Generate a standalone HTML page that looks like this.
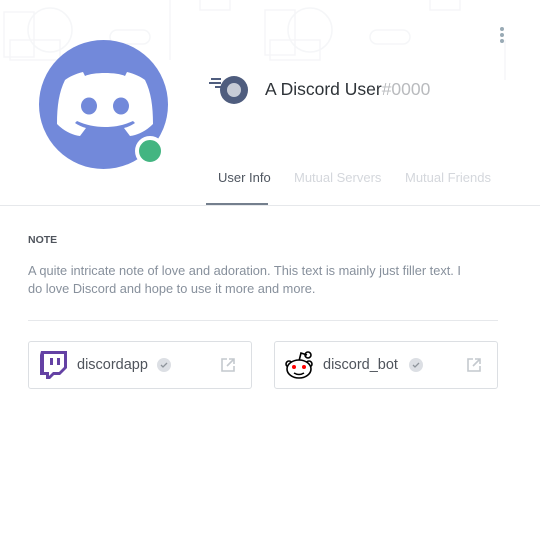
<!DOCTYPE html>
<html><head><style>
body{margin:0;width:540px;height:546px;background:#fff;font-family:"Liberation Sans",sans-serif;position:relative;overflow:hidden}
.hdr{position:absolute;left:0;top:0;width:540px;height:205px;background:#fff;border-bottom:1px solid #e6e8eb}
.t{position:absolute;white-space:nowrap}
.card{position:absolute;top:341px;width:222px;height:46px;border:1px solid #dcdfe3;border-radius:3px}
</style></head><body>
<div class="hdr">
<svg width="540" height="205" style="position:absolute;left:0;top:0" fill="none" stroke="#f5f6f8" stroke-width="1.5">
<rect x="4" y="12" width="30" height="45"/><circle cx="50" cy="30" r="22"/><rect x="10" y="40" width="50" height="20"/>
<rect x="265" y="10" width="30" height="45"/><circle cx="310" cy="30" r="22"/><rect x="270" y="40" width="50" height="20"/>
<path d="M170 0v60M200 0v10h30V0M430 0v10h30V0M505 40v40"/>
<rect x="110" y="30" width="40" height="14" rx="7"/><rect x="370" y="30" width="40" height="14" rx="7"/>
</svg>
<div style="position:absolute;left:39px;top:40px;width:129px;height:129px;border-radius:50%;background:#7289da"></div>
<svg style="position:absolute;left:55px;top:68px" width="100" height="75" viewBox="0 0 100 75">
<path fill="#fff" d="M28 4C20 6 14 9 10 12 4 24 2 38 2 56 9 63 17 67 25 68l6-8c-4-1-8-3-11-5l2-2c17 8 39 8 56 0l2 2c-3 2-7 4-11 5l6 8c8-1 16-5 23-12 0-18-2-32-8-44-4-3-10-6-18-8l-2 4C62 4 38 4 30 8z"/>
<ellipse cx="34" cy="38" rx="8" ry="8.5" fill="#7289da"/><ellipse cx="66" cy="38" rx="8" ry="8.5" fill="#7289da"/>
</svg>
<div style="position:absolute;left:135px;top:136px;width:22px;height:22px;border-radius:50%;background:#43b581;border:4px solid #fff"></div>
<svg style="position:absolute;left:207px;top:74px" width="42" height="32" viewBox="0 0 42 32">
<circle cx="27" cy="16" r="14" fill="#4f5d7e"/><circle cx="27" cy="16" r="7" fill="#c7ccd6"/>
<path d="M4 5h10M2 9h12M8 13h6" stroke="#4f5d7e" stroke-width="2"/>
</svg>
<div class="t" style="left:265px;top:79px;font-size:17.5px;color:#2e3338">A Discord User<span style="color:#b9bbbe">#0000</span></div>
<div style="position:absolute;left:500px;top:27px">
<div style="width:4px;height:4px;border-radius:50%;background:#99aab5;margin-bottom:2px"></div>
<div style="width:4px;height:4px;border-radius:50%;background:#99aab5;margin-bottom:2px"></div>
<div style="width:4px;height:4px;border-radius:50%;background:#99aab5"></div></div>
<div class="t" style="left:218px;top:170px;font-size:13px;color:#4f5660">User Info</div>
<div class="t" style="left:294px;top:170px;font-size:13px;color:#d4d7dc">Mutual Servers</div>
<div class="t" style="left:405px;top:170px;font-size:13px;color:#d4d7dc">Mutual Friends</div>
<div style="position:absolute;left:206px;top:203px;width:62px;height:2px;background:#747f8d"></div>
</div>
<div class="t" style="left:28px;top:234px;font-size:10.5px;font-weight:bold;color:#4f545c">NOTE</div>
<div style="position:absolute;left:28px;top:262px;width:462px;font-size:12.8px;line-height:18px;color:#87909c">A quite intricate note of love and adoration. This text is mainly just filler text. I<br>do love Discord and hope to use it more and more.</div>
<div style="position:absolute;left:28px;top:320px;width:470px;height:1px;background:#e6e8eb"></div>
<div class="card" style="left:28px">
<svg style="position:absolute;left:9px;top:8px" width="30" height="30" viewBox="0 0 30 30"><path fill="#6441a4" d="M3 1h26v17l-7 7h-6l-4 4H8v-4H2V5z"/><path fill="#fff" d="M6 4h20v13l-5 5h-6l-4 4v-4H6z"/><path fill="#6441a4" d="M12 8h3v7h-3zM19 8h3v7h-3z"/></svg>
<div class="t" style="left:48px;top:15px;font-size:14.5px;color:#4f545c">discordapp</div>
<svg style="position:absolute;left:127px;top:15px" width="16" height="16"><circle cx="8" cy="8" r="7" fill="#dcdfe4"/><path d="M5 8l2 2 4-4" stroke="#8e949b" fill="none" stroke-width="1.3"/></svg>
<svg style="position:absolute;left:191px;top:15px" width="16" height="16" fill="none" stroke="#c4c9ce" stroke-width="1.6"><path d="M7 2H2v12h12V9M9 2h5v5M14 2L7 9"/></svg>
</div>
<div class="card" style="left:274px">
<svg style="position:absolute;left:8px;top:7px" width="32" height="32" viewBox="0 0 32 32" fill="#fff" stroke="#000" stroke-width="1.6"><circle cx="25" cy="6" r="3"/><path d="M16 12l2-8 6 2" fill="none"/><circle cx="6" cy="15" r="3"/><circle cx="26" cy="15" r="3"/><ellipse cx="16" cy="20" rx="12" ry="9"/><circle cx="11" cy="18" r="2" fill="#f00" stroke="none"/><circle cx="21" cy="18" r="2" fill="#f00" stroke="none"/><path d="M11 24q5 3 10 0" fill="none"/></svg>
<div class="t" style="left:48px;top:15px;font-size:14.5px;color:#4f545c">discord_bot</div>
<svg style="position:absolute;left:133px;top:15px" width="16" height="16"><circle cx="8" cy="8" r="7" fill="#dcdfe4"/><path d="M5 8l2 2 4-4" stroke="#8e949b" fill="none" stroke-width="1.3"/></svg>
<svg style="position:absolute;left:191px;top:15px" width="16" height="16" fill="none" stroke="#c4c9ce" stroke-width="1.6"><path d="M7 2H2v12h12V9M9 2h5v5M14 2L7 9"/></svg>
</div>
</body></html>
